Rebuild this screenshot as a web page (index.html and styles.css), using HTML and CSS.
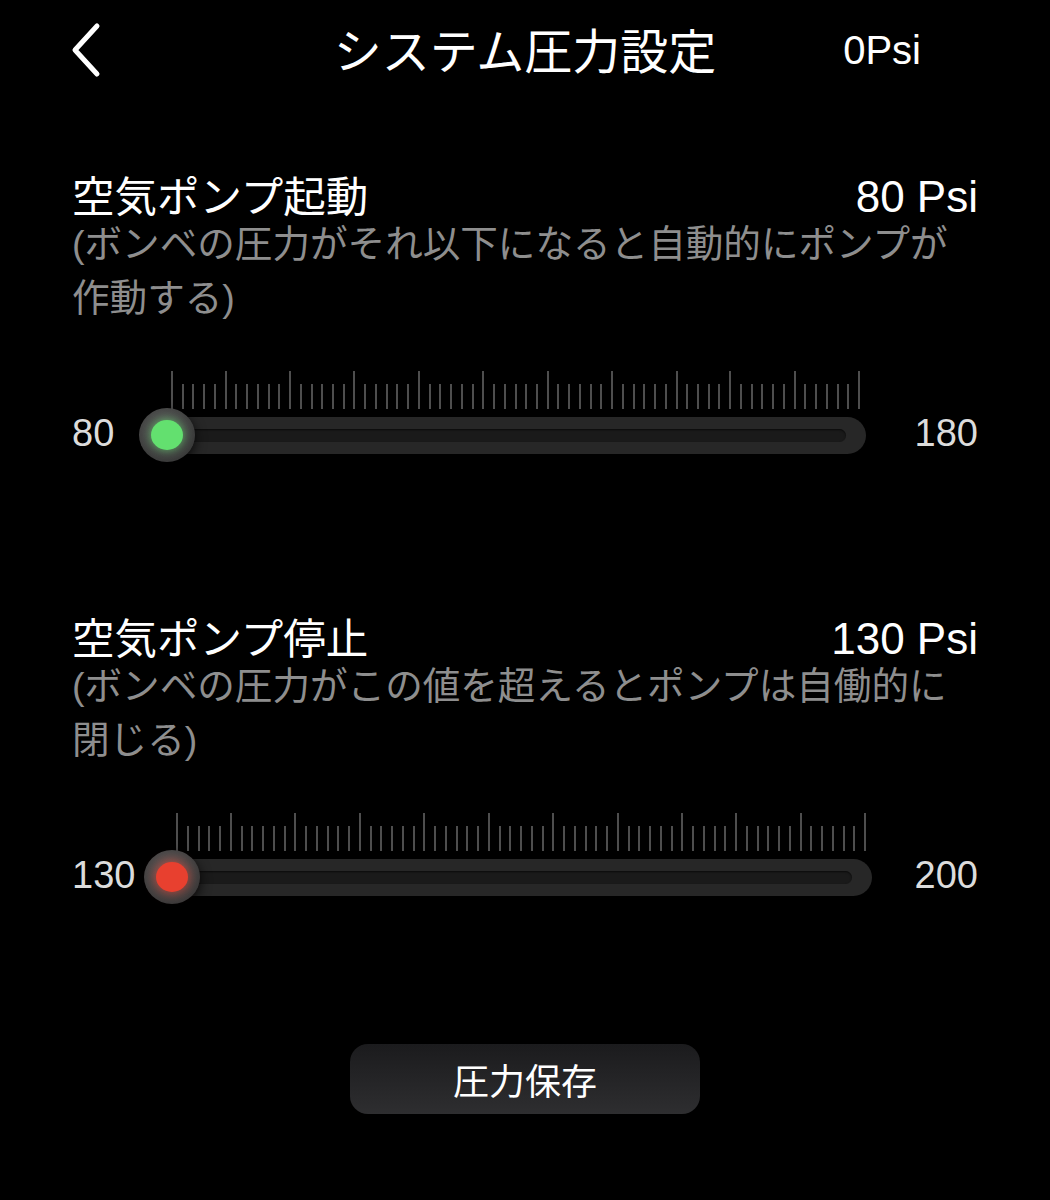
FILE: index.html
```html
<!DOCTYPE html>
<html lang="ja">
<head>
    <meta charset="utf-8">
    <title>システム圧力設定</title>
    <link rel="stylesheet" href="styles.css">
</head>
<body>
    <div class="page">
        <div class="header">
            <div class="back">
                <svg width="34" height="56" viewBox="0 0 34 56">
                    <path d="M28 4 L6 28 L28 52" fill="none" stroke="#fff" stroke-width="5" stroke-linecap="round" stroke-linejoin="round"/>
                </svg>
            </div>
            <div class="title">システム圧力設定</div>
            <div class="current">0Psi</div>
        </div>

        <div class="section first">
            <div class="section-head">
                <span class="section-title">空気ポンプ起動</span>
                <span class="section-value">80 Psi</span>
            </div>
            <div class="section-desc">(ボンベの圧力がそれ以下になると自動的にポンプが作動する)</div>
            <div class="slider slider-start">
                <div class="ticks"></div>
                <span class="slider-min">80</span>
                <div class="track">
                    <div class="groove"></div>
                    <div class="thumb"><div class="dot green"></div></div>
                </div>
                <span class="slider-max">180</span>
            </div>
        </div>

        <div class="section second">
            <div class="section-head">
                <span class="section-title">空気ポンプ停止</span>
                <span class="section-value">130 Psi</span>
            </div>
            <div class="section-desc">(ボンベの圧力がこの値を超えるとポンプは自働的に閉じる)</div>
            <div class="slider slider-stop">
                <div class="ticks"></div>
                <span class="slider-min">130</span>
                <div class="track">
                    <div class="groove"></div>
                    <div class="thumb"><div class="dot red"></div></div>
                </div>
                <span class="slider-max">200</span>
            </div>
        </div>

        <div class="actions">
            <button class="save-button">圧力保存</button>
        </div>
    </div>

    <script>
        // 65 ticks, long ones at these positions
        const majors = [0, 5, 11, 17, 23, 29, 35, 41, 47, 52, 58, 64];
        document.querySelectorAll(".ticks").forEach((box) => {
            for (let i = 0; i <= 64; i++) {
                const tick = document.createElement("span");
                tick.className = majors.includes(i) ? "tick major" : "tick";
                box.appendChild(tick);
            }
        });
    </script>
</body>
</html>
```

FILE: styles.css
```css
body {
    margin: 0;
    padding: 0;
    background: #000;
    color: #fff;
    font-family: "Liberation Sans", "Noto Sans CJK JP", sans-serif;
}
.page {
    width: 1050px;
    padding: 0 72px;
    box-sizing: border-box;
}
.header {
    height: 100px;
    display: grid;
    grid-template-columns: 1fr auto 1fr;
    align-items: center;
}
.back {
    display: flex;
    align-items: center;
    margin-left: -3px;
}
.title {
    font-size: 48px;
    margin-top: -4px;
}
.current {
    justify-self: end;
    margin-right: 57px;
    font-size: 40px;
}
.section.first {
    margin-top: 76px;
}
.section.second {
    margin-top: 164px;
}
.section-head {
    display: flex;
    justify-content: space-between;
    align-items: baseline;
    height: 41px;
    line-height: 41px;
}
.section-title {
    font-size: 42.5px;
}
.section-value {
    font-size: 44px;
}
.section-desc {
    font-size: 37.6px;
    line-height: 54px;
    color: #8e8e8e;
}
.slider {
    display: grid;
    grid-template-rows: 38px 37px;
    row-gap: 8px;
    margin-top: 46px;
    color: #dcdcdc;
    font-size: 38px;
}
.slider-start {
    grid-template-columns: 68px 726px 1fr;
}
.slider-stop {
    grid-template-columns: 73px 727px 1fr;
}
.ticks {
    grid-column: 2;
    grid-row: 1;
    display: flex;
    justify-content: space-between;
    align-items: flex-end;
    margin: 0 6px 0 31px;
}
.tick {
    width: 2px;
    height: 25px;
    background: #4e4e4e;
}
.tick.major {
    height: 38px;
}
.slider-min,
.slider-max {
    grid-row: 2;
    line-height: 33px;
}
.slider-max {
    text-align: right;
}
.track {
    grid-row: 2;
    position: relative;
    height: 37px;
    padding: 12px 20px;
    box-sizing: border-box;
    background: #272727;
    border-radius: 19px;
}
.groove {
    height: 13px;
    background: #1a1a1a;
    border-radius: 7px;
    box-shadow: inset 0 1px 2px rgba(0, 0, 0, 0.6);
}
.thumb {
    position: absolute;
    left: -1px;
    top: -9px;
    width: 56px;
    height: 54px;
    border-radius: 50%;
    background: radial-gradient(circle at 45% 40%, #606060, #3e3e3e 65%, #2c2c2c);
    box-shadow: 0 4px 12px rgba(0, 0, 0, 0.8);
    display: flex;
    align-items: center;
    justify-content: center;
}
.dot {
    width: 32px;
    height: 30px;
    border-radius: 50%;
}
.dot.green {
    background: #63e06f;
    box-shadow: 0 0 10px rgba(99, 224, 111, 0.7);
}
.dot.red {
    background: #e8402f;
    box-shadow: 0 0 12px rgba(232, 64, 47, 0.8);
}
.actions {
    display: flex;
    justify-content: center;
    margin-top: 148px;
}
.save-button {
    width: 350px;
    height: 70px;
    border: none;
    border-radius: 18px;
    background: linear-gradient(to bottom, #1b1b1d, #2e2e30);
    color: #fff;
    font-family: "Liberation Sans", "Noto Sans CJK JP", sans-serif;
    font-size: 36px;
}
```
